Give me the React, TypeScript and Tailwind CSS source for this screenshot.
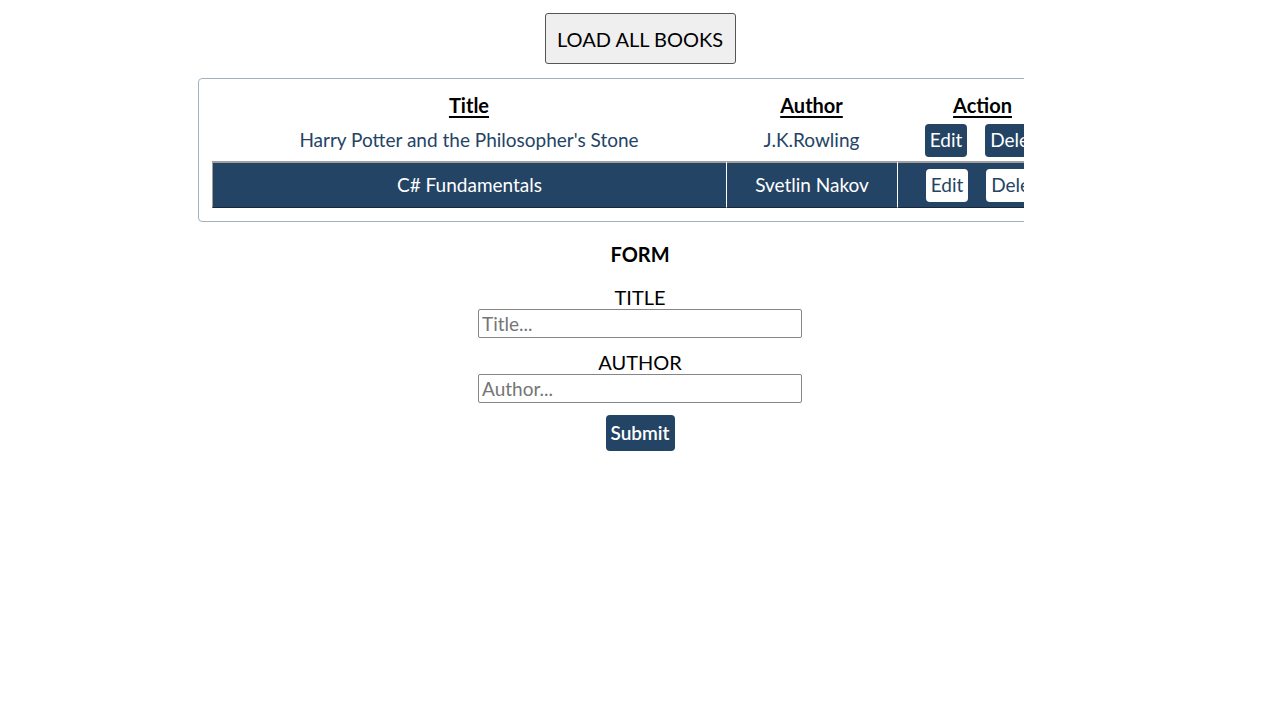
const books = [
  { title: "Harry Potter and the Philosopher's Stone", author: "J.K.Rowling" },
  { title: "C# Fundamentals", author: "Svetlin Nakov" },
];

export default function App() {
  return (
    <div className="min-h-screen bg-white font-['Lato','Noto_Sans',sans-serif] text-[20px] text-black">
      <div className="flex justify-center pt-[13px]">
        <button className="h-[51px] w-[191px] rounded-[3px] border border-[#555] bg-[#efefef] text-[20px] leading-none">
          LOAD ALL BOOKS
        </button>
      </div>

      {/* the list box is wider than its clipping parent, so the right side is cut */}
      <div className="mt-[14px] w-[1024px] overflow-hidden">
        <div className="ml-[198px] w-[884px] rounded-[4px] border border-[#a3b1bf] px-[13px] pt-[11px] pb-[13px]">
          <table className="w-[856px] table-fixed border-separate border-spacing-0 text-center text-[19px]">
            <colgroup>
              <col className="w-[514px]" />
              <col className="w-[171px]" />
              <col className="w-[171px]" />
            </colgroup>
            <thead>
              <tr className="h-[30px] text-[20px]">
                <th className="font-bold underline underline-offset-[3px]">Title</th>
                <th className="font-bold underline underline-offset-[3px]">Author</th>
                <th className="font-bold underline underline-offset-[3px]">Action</th>
              </tr>
            </thead>
            <tbody>
              {books.map((b, i) => {
                const dark = i === 1;
                const cell = dark
                  ? "bg-[#234465] text-white border-t-2 border-t-[#a0a0a0] border-b border-b-[#16283c]"
                  : "text-[#234465]";
                const btn = dark
                  ? "bg-white text-[#234465]"
                  : "bg-[#234465] text-white";
                return (
                  <tr key={b.title} className={dark ? "h-[47px]" : "h-[41px]"}>
                    <td className={`${cell} ${dark ? "border-l border-l-[#a0a0a0]" : ""}`}>{b.title}</td>
                    <td className={`${cell} ${dark ? "border-l border-l-white" : ""}`}>{b.author}</td>
                    <td className={`${cell} ${dark ? "border-l border-l-white" : ""}`}>
                      <div className="flex justify-start gap-[18px] pl-[28px]">
                        <button className={`h-[33px] w-[42px] rounded-[4px] ${btn}`}>Edit</button>
                        <button className={`h-[33px] w-[66px] rounded-[4px] ${btn}`}>Delete</button>
                      </div>
                    </td>
                  </tr>
                );
              })}
            </tbody>
          </table>
        </div>
      </div>

      <form className="mt-[20px] flex flex-col items-center" onSubmit={(e) => e.preventDefault()}>
        <h3 className="text-[20px] font-bold leading-[24px]">FORM</h3>
        <label className="mt-[20px] leading-[23px]">TITLE</label>
        <input
          className="h-[29px] w-[324px] rounded-[2px] border border-[#858585] px-[3px] text-[19px] placeholder:text-[#757575]"
          placeholder="Title..."
        />
        <label className="mt-[13px] leading-[23px]">AUTHOR</label>
        <input
          className="h-[29px] w-[324px] rounded-[2px] border border-[#858585] px-[3px] text-[19px] placeholder:text-[#757575]"
          placeholder="Author..."
        />
        <button className="mt-[12px] h-[36px] w-[69px] rounded-[4px] bg-[#234465] text-[19px] font-semibold text-white">
          Submit
        </button>
      </form>
    </div>
  );
}
